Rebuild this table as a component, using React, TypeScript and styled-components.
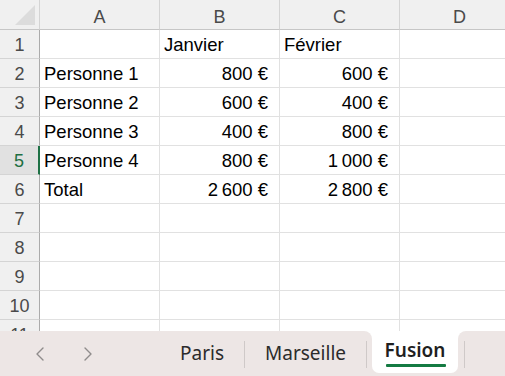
import React from 'react';
import styled, { createGlobalStyle, css } from 'styled-components';

const GlobalStyle = createGlobalStyle`
  html, body {
    margin: 0;
    padding: 0;
    background: #ffffff;
    overflow: hidden;
  }
`;

const NNBSP = '\u202F';

const columns = ['A', 'B', 'C', 'D'];

type Cell = { text: string; align?: 'left' | 'right' };

const rows: Cell[][] = [
  [{ text: '' }, { text: 'Janvier' }, { text: 'Février' }],
  [{ text: 'Personne 1' }, { text: '800 €', align: 'right' }, { text: '600 €', align: 'right' }],
  [{ text: 'Personne 2' }, { text: '600 €', align: 'right' }, { text: '400 €', align: 'right' }],
  [{ text: 'Personne 3' }, { text: '400 €', align: 'right' }, { text: '800 €', align: 'right' }],
  [{ text: 'Personne 4' }, { text: '800 €', align: 'right' }, { text: `1${NNBSP}000 €`, align: 'right' }],
  [{ text: 'Total' }, { text: `2${NNBSP}600 €`, align: 'right' }, { text: `2${NNBSP}800 €`, align: 'right' }],
];

const ROW_COUNT = 11;
const ACTIVE_ROW = 5;

const Window = styled.div`
  width: 505px;
  height: 376px;
  display: flex;
  flex-direction: column;
  font-family: 'Liberation Sans', Arial, sans-serif;
`;

const Sheet = styled.div`
  flex: 0 0 331px;
  overflow: hidden;
  display: grid;
  grid-template-columns: 40px repeat(4, 120px);
  grid-auto-rows: 29px;
  grid-template-rows: 30px;
`;

const Corner = styled.div`
  position: relative;
  background: #f0f0f0;
  border-right: 1px solid #d4d4d4;
  border-bottom: 1px solid #c6c6c6;
  box-sizing: border-box;
`;

const CornerMark = styled.div`
  position: absolute;
  left: 15px;
  top: 5px;
  width: 20px;
  height: 20px;
  background: #dcdcdc;
  clip-path: polygon(100% 0, 100% 100%, 0 100%);
`;

const ColHead = styled.div`
  display: flex;
  align-items: center;
  justify-content: center;
  padding-top: 5px;
  box-sizing: border-box;
  background: #f0f0f0;
  border-right: 1px solid #d4d4d4;
  border-bottom: 1px solid #c6c6c6;
  color: #4a4a4a;
  font-size: 18px;
`;

const RowHead = styled.div<{ $active?: boolean }>`
  display: flex;
  align-items: center;
  justify-content: center;
  padding-top: 2px;
  box-sizing: border-box;
  background: #f0f0f0;
  border-right: 1px solid #ababab;
  border-bottom: 1px solid #d4d4d4;
  color: #4a4a4a;
  font-size: 18px;
  ${(p) =>
    p.$active &&
    css`
      background: #e1e1e1;
      color: #1f6f43;
      border-right: 2px solid #1e7145;
    `}
`;

const DataCell = styled.div<{ $align?: 'left' | 'right' }>`
  display: flex;
  align-items: center;
  justify-content: ${(p) => (p.$align === 'right' ? 'flex-end' : 'flex-start')};
  padding: 2px 11px 0 4px;
  box-sizing: border-box;
  border-right: 1px solid #e1e1e1;
  border-bottom: 1px solid #e1e1e1;
  color: #000000;
  font-size: 18.5px;
  white-space: nowrap;
`;

const TabBar = styled.div`
  flex: 1;
  display: flex;
  background: #ffffff;
  font-family: 'Noto Sans', 'Open Sans', sans-serif;
`;

const Strip = styled.div<{ $side: 'left' | 'right' }>`
  display: flex;
  align-items: center;
  background: #ede6e5;
  ${(p) =>
    p.$side === 'left'
      ? css`
          flex: 0 0 372px;
          border-top-right-radius: 8px;
        `
      : css`
          flex: 1;
          border-top-left-radius: 8px;
          padding-left: 6px;
        `}
`;

const Nav = styled.div`
  flex: 0 0 160px;
  display: flex;
  gap: 24px;
  padding-left: 28px;
  box-sizing: border-box;
`;

const NavButton = styled.div`
  width: 24px;
  height: 24px;
  display: flex;
  align-items: center;
  justify-content: center;
`;

const Tab = styled.div`
  padding: 0 20px 2px;
  font-size: 19px;
  color: #2b2b2b;
  white-space: nowrap;
`;

const Divider = styled.div`
  flex: 0 0 1px;
  height: 27px;
  margin-top: 2px;
  background: #cfc9c8;
`;

const ActiveSlot = styled.div`
  flex: 0 0 86px;
  display: flex;
  background: #ede6e5;
  padding-bottom: 3px;
`;

const ActiveTab = styled.div`
  flex: 1;
  background: #ffffff;
  border-radius: 0 0 7px 7px;
  display: flex;
  flex-direction: column;
  align-items: center;
  justify-content: center;
`;

const ActiveLabel = styled.span`
  position: relative;
  font-size: 19px;
  font-weight: 600;
  color: #1f1f1f;
  padding-bottom: 4px;

  &::after {
    content: '';
    position: absolute;
    left: 1px;
    right: -1px;
    bottom: 0;
    height: 3px;
    border-radius: 1px;
    background: #147a42;
  }
`;

const Chevron = ({ dir }: { dir: 'left' | 'right' }) => (
  <svg width="10" height="14" viewBox="0 0 10 14" fill="none">
    <path
      d={dir === 'left' ? 'M8 1 L2 7 L8 13' : 'M2 1 L8 7 L2 13'}
      stroke="#8f8c8b"
      strokeWidth="1.4"
      strokeLinecap="round"
      strokeLinejoin="round"
    />
  </svg>
);

export default function App() {
  return (
    <>
      <GlobalStyle />
      <Window>
        <Sheet>
          <Corner>
            <CornerMark />
          </Corner>
          {columns.map((c) => (
            <ColHead key={c}>{c}</ColHead>
          ))}
          {Array.from({ length: ROW_COUNT }, (_, i) => {
            const n = i + 1;
            const data = rows[i] ?? [];
            return (
              <React.Fragment key={n}>
                <RowHead $active={n === ACTIVE_ROW}>{n}</RowHead>
                {columns.map((c, ci) => (
                  <DataCell key={c} $align={data[ci]?.align}>
                    {data[ci]?.text}
                  </DataCell>
                ))}
              </React.Fragment>
            );
          })}
        </Sheet>
        <TabBar>
          <Strip $side="left">
            <Nav>
              <NavButton>
                <Chevron dir="left" />
              </NavButton>
              <NavButton>
                <Chevron dir="right" />
              </NavButton>
            </Nav>
            <Tab>Paris</Tab>
            <Divider />
            <Tab>Marseille</Tab>
            <Divider />
          </Strip>
          <ActiveSlot>
            <ActiveTab>
              <ActiveLabel>Fusion</ActiveLabel>
            </ActiveTab>
          </ActiveSlot>
          <Strip $side="right">
            <Divider />
          </Strip>
        </TabBar>
      </Window>
    </>
  );
}
